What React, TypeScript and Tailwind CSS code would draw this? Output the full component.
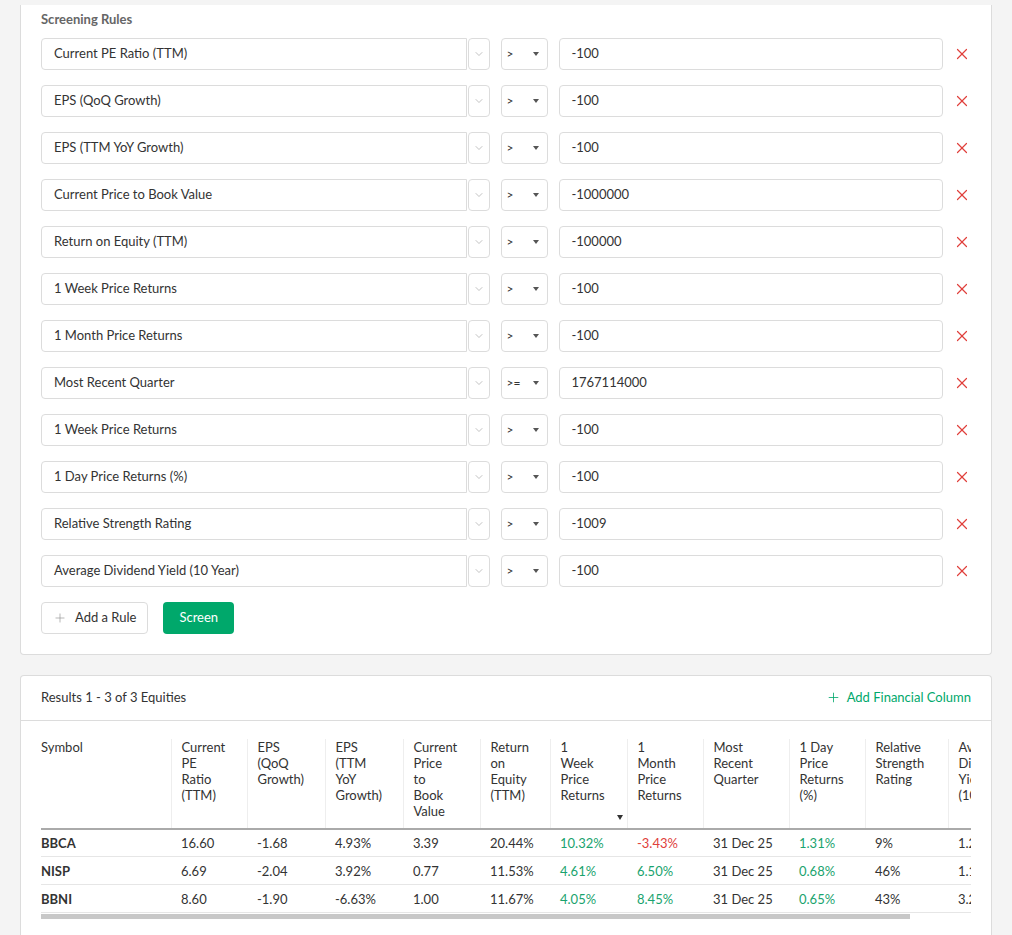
import { Plus, X, ChevronDown } from "lucide-react";

const rules = [
  ["Current PE Ratio (TTM)", ">", "-100"],
  ["EPS (QoQ Growth)", ">", "-100"],
  ["EPS (TTM YoY Growth)", ">", "-100"],
  ["Current Price to Book Value", ">", "-1000000"],
  ["Return on Equity (TTM)", ">", "-100000"],
  ["1 Week Price Returns", ">", "-100"],
  ["1 Month Price Returns", ">", "-100"],
  ["Most Recent Quarter", ">=", "1767114000"],
  ["1 Week Price Returns", ">", "-100"],
  ["1 Day Price Returns (%)", ">", "-100"],
  ["Relative Strength Rating", ">", "-1009"],
  ["Average Dividend Yield (10 Year)", ">", "-100"],
];

const cols = [
  { w: 130, h: ["Symbol"] },
  { w: 76, h: ["Current", "PE", "Ratio", "(TTM)"] },
  { w: 78, h: ["EPS", "(QoQ", "Growth)"] },
  { w: 78, h: ["EPS", "(TTM", "YoY", "Growth)"] },
  { w: 77, h: ["Current", "Price", "to", "Book", "Value"] },
  { w: 70, h: ["Return", "on", "Equity", "(TTM)"] },
  { w: 77, h: ["1", "Week", "Price", "Returns"], sort: true },
  { w: 76, h: ["1", "Month", "Price", "Returns"] },
  { w: 86, h: ["Most", "Recent", "Quarter"] },
  { w: 76, h: ["1 Day", "Price", "Returns", "(%)"] },
  { w: 83, h: ["Relative", "Strength", "Rating"] },
  { w: 70, h: ["Average", "Dividend", "Yield", "(10"] },
];

type Cell = [string, string?];
const rows: Cell[][] = [
  [["BBCA"], ["16.60"], ["-1.68"], ["4.93%"], ["3.39"], ["20.44%"], ["10.32%", "g"], ["-3.43%", "r"], ["31 Dec 25"], ["1.31%", "g"], ["9%"], ["1.24%"]],
  [["NISP"], ["6.69"], ["-2.04"], ["3.92%"], ["0.77"], ["11.53%"], ["4.61%", "g"], ["6.50%", "g"], ["31 Dec 25"], ["0.68%", "g"], ["46%"], ["1.10%"]],
  [["BBNI"], ["8.60"], ["-1.90"], ["-6.63%"], ["1.00"], ["11.67%"], ["4.05%", "g"], ["8.45%", "g"], ["31 Dec 25"], ["0.65%", "g"], ["43%"], ["3.20%"]],
];

export default function App() {
  return (
    <div className="min-h-[935px] bg-[#f4f4f4] px-5 pt-[5px] text-[13px] text-[#333]" style={{ fontFamily: "Lato, 'Open Sans', sans-serif" }}>
      <div className="rounded-b border border-t-0 border-[#dcdcdc] bg-white px-5 pb-5 pt-[5px]">
        <div className="mb-[8px] text-[13px] font-bold text-[#666]">Screening Rules</div>
        <div className="flex flex-col gap-[15px]">
          {rules.map(([f, op, v], i) => (
            <div key={i} className="flex h-[32px] items-center">
              <div className="flex h-full w-[426px] items-center rounded-l-sm border border-[#dcdcdc] pl-3">{f}</div>
              <div className="ml-[1px] flex h-full w-[23px] items-center justify-center rounded-sm border border-[#dcdcdc]">
                <ChevronDown className="h-3 w-3 text-[#999]" strokeWidth={1.2} />
              </div>
              <div className="ml-[11px] flex h-full w-[47px] items-center justify-between rounded-sm border border-[#dcdcdc] pl-[4px] pr-[8px] text-[12px]">
                <span>{op}</span>
                <span className="border-x-[3.5px] border-t-[4px] border-x-transparent border-t-[#555]" />
              </div>
              <div className="ml-[11px] flex h-full w-[384px] items-center rounded-sm border border-[#dcdcdc] pl-[11px]">{v}</div>
              <X className="ml-[10px] h-[18px] w-[18px] text-[#e0403c]" strokeWidth={1.6} />
            </div>
          ))}
        </div>
        <div className="mt-[15px] flex gap-[15px]">
          <div className="flex h-[32px] items-center gap-2 rounded-sm border border-[#dcdcdc] px-[11px]">
            <Plus className="h-[14px] w-[14px] text-[#999]" strokeWidth={1.2} />
            <span>Add a Rule</span>
          </div>
          <div className="flex h-[32px] items-center rounded-sm bg-[#00a86b] px-4 text-white">Screen</div>
        </div>
      </div>

      <div className="mt-5 rounded-t border border-b-0 border-[#dcdcdc] bg-white">
        <div className="flex h-[45px] items-center justify-between border-b border-[#dcdcdc] px-5">
          <span>Results 1 - 3 of 3 Equities</span>
          <span className="flex items-center gap-[6px] text-[#00a86b]">
            <Plus className="h-[15px] w-[15px]" strokeWidth={1.3} />
            Add Financial Column
          </span>
        </div>
        <div className="mx-5 overflow-hidden pb-[20px] pt-[18px]">
          <table className="border-collapse text-left text-[13px] leading-[16px]">
            <thead>
              <tr className="border-b-2 border-[#aaa]">
                {cols.map((c, i) => (
                  <th key={i} style={{ minWidth: c.w, width: c.w }} className={`relative h-[90px] align-top font-normal pb-2 ${i > 0 ? "border-l border-[#eee] pl-[10px]" : ""}`}>
                    {c.h.map((l, j) => (
                      <div key={j} className="whitespace-nowrap">{l}</div>
                    ))}
                    {c.sort && <span className="absolute bottom-[8px] left-[66px] border-x-[3.5px] border-t-[5px] border-x-transparent border-t-[#333]" />}
                  </th>
                ))}
              </tr>
            </thead>
            <tbody>
              {rows.map((r, i) => (
                <tr key={i} className="border-b border-[#e6e6e6]">
                  {r.map(([v, c], j) => (
                    <td key={j} className={`h-[28px] whitespace-nowrap ${j > 0 ? "pl-[10px]" : "font-bold"} ${c === "g" ? "text-[#1aa36e]" : c === "r" ? "text-[#e0403c]" : ""}`}>
                      {v}
                    </td>
                  ))}
                </tr>
              ))}
            </tbody>
          </table>
          <div className="mt-[1px] h-[5px] w-[869px] bg-[#c8c8c8]" />
        </div>
      </div>
    </div>
  );
}
